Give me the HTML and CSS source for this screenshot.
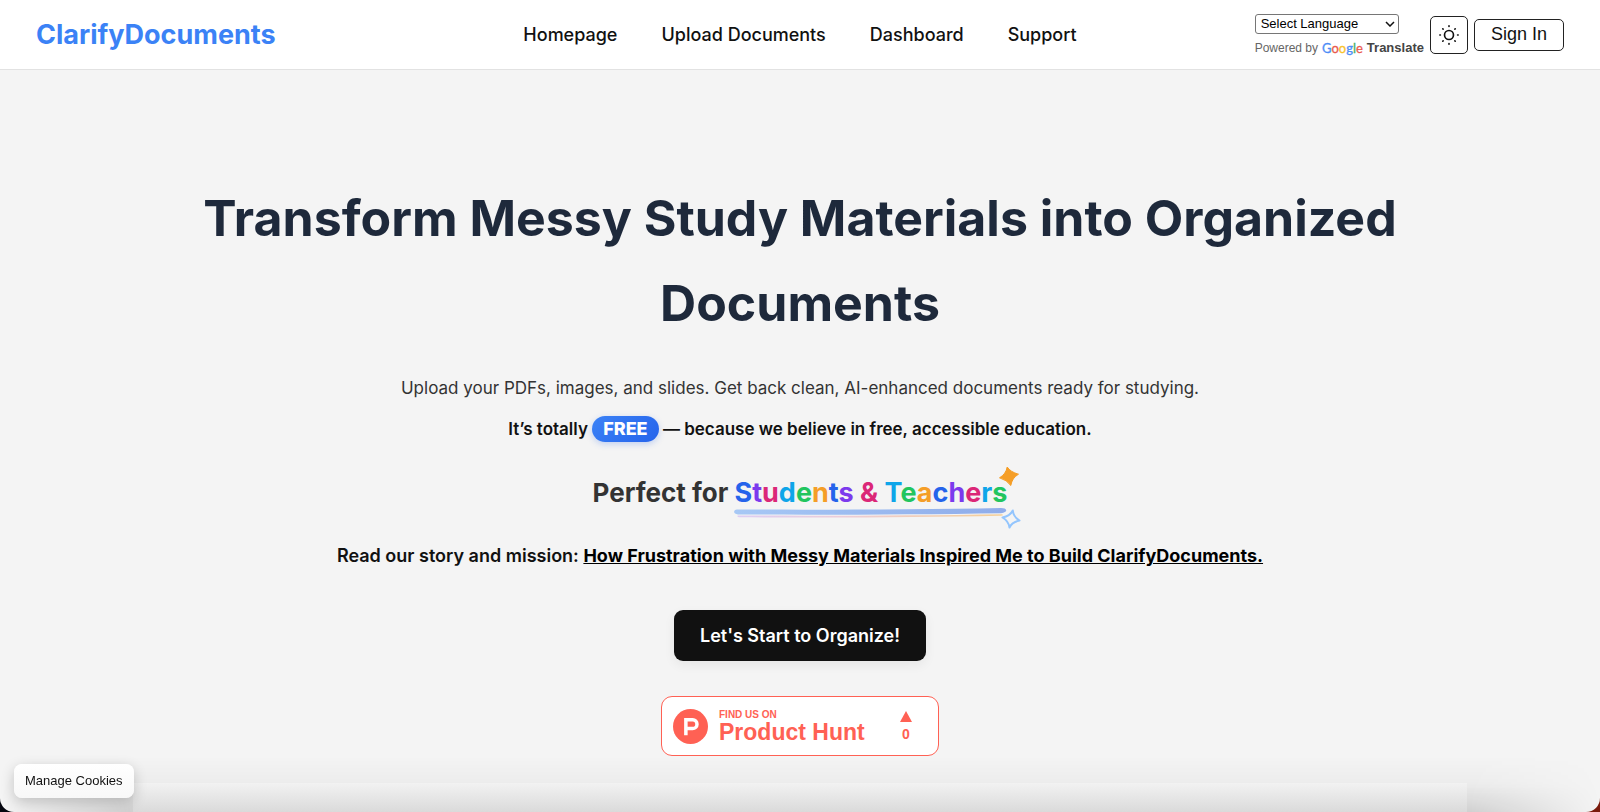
FILE: index.html
```html
<!DOCTYPE html>
<html lang="en">
<head>
    <meta charset="UTF-8">
    <meta name="viewport" content="width=device-width, initial-scale=1.0">
    <title>ClarifyDocuments</title>
    <link rel="stylesheet" href="styles.css">
</head>
<body>
    <div class="page">
        <header class="header">
            <a class="logo" href="#">ClarifyDocuments</a>

            <nav class="nav">
                <a href="#">Homepage</a>
                <a href="#">Upload Documents</a>
                <a href="#">Dashboard</a>
                <a href="#">Support</a>
            </nav>

            <div class="header-actions">
                <div class="translate">
                    <div class="select-wrap">
                        <select class="language-select" aria-label="Select Language">
                            <option>Select Language</option>
                        </select>
                        <svg class="chevron" viewBox="0 0 10 6" aria-hidden="true"><path d="M1 1l4 4 4-4"/></svg>
                    </div>
                    <div class="powered">
                        <span>Powered by</span>
                        <span class="google"><span class="g-blue">G</span><span class="g-red">o</span><span class="g-yellow">o</span><span class="g-blue">g</span><span class="g-green">l</span><span class="g-red">e</span></span>
                        <a class="translate-link" href="#">Translate</a>
                    </div>
                </div>
                <button class="theme-btn" aria-label="Toggle theme">
                    <svg viewBox="0 0 24 24" aria-hidden="true">
                        <circle cx="12" cy="12" r="4.900"/>
                        <path d="M12 2v.6M12 21.400V22M2 12h.6M21.400 12H22M5.200 5.200l.4.4M18.400 18.400l.4.4M5.200 18.800l.4-.4M18.400 5.600l.4-.4"/>
                    </svg>
                </button>
                <button class="signin-btn">Sign In</button>
            </div>
        </header>

        <main class="hero">
            <h1>Transform Messy Study Materials into Organized Documents</h1>

            <p class="lead">Upload your PDFs, images, and slides. Get back clean, AI-enhanced documents ready for studying.</p>

            <p class="free-line">It’s totally <span class="free-badge">FREE</span> — because we believe in free, accessible education.</p>

            <h2 class="audience">
                Perfect for
                <span class="rainbow">
                    <span class="c-blue">S</span><span class="c-purple">t</span><span class="c-pink">u</span><span class="c-sky">d</span><span class="c-green">e</span><span class="c-orange">n</span><span class="c-blue">t</span><span class="c-purple">s</span> <span class="c-pink">&amp;</span> <span class="c-sky">T</span><span class="c-green">e</span><span class="c-orange">a</span><span class="c-blue">c</span><span class="c-purple">h</span><span class="c-pink">e</span><span class="c-sky">r</span><span class="c-green">s</span>
                    <svg class="underline" viewBox="0 0 274 10" preserveAspectRatio="none" aria-hidden="true">
                        <defs>
                            <linearGradient id="brush" x1="0" x2="1">
                                <stop offset="0" stop-color="#a7c8f5"/>
                                <stop offset="1" stop-color="#8facea"/>
                            </linearGradient>
                            <linearGradient id="thin" x1="0" x2="1">
                                <stop offset="0" stop-color="#dccdf3"/>
                                <stop offset=".4" stop-color="#ecccd8"/>
                                <stop offset="1" stop-color="#f5cf96"/>
                            </linearGradient>
                        </defs>
                        <path fill="url(#brush)" d="M3 1.500C90 2 190 1.500 268 0C275 0 275 4.500 268 5.200C190 6.500 90 7 4 6.500C-1 6-1 2 3 1.500Z"/>
                        <path fill="url(#thin)" d="M4 7.500C90 8 190 7.500 269 6.200C271 7 270 7.600 266 7.800C190 9.600 90 9.800 5 9.300C3 9 3 7.500 4 7.500Z"/>
                    </svg>
                    <svg class="star star-solid" viewBox="0 0 20 20" aria-hidden="true">
                        <path fill="#f59e27" stroke="#f59e27" stroke-linejoin="round" d="M8.200 1Q11.500 6 19.500 8.200Q13 12 11.800 19.500Q8 14 .5 11.800Q7 8 8.200 1Z"/>
                    </svg>
                    <svg class="star star-outline" viewBox="0 0 20 20" aria-hidden="true">
                        <path fill="#f4f4f4" stroke="#93c5fd" stroke-width="2" stroke-linejoin="round" d="M11.800 1.500Q12.500 8 18.500 11.500Q11 13 8.500 18.500Q7.500 12 1.500 8.500Q9 7 11.800 1.500Z"/>
                    </svg>
                </span>
            </h2>

            <p class="story">Read our story and mission: <a href="#">How Frustration with Messy Materials Inspired Me to Build ClarifyDocuments.</a></p>

            <button class="cta-btn">Let's Start to Organize!</button>

            <a class="ph-badge" href="#">
                <svg class="ph-logo" viewBox="0 0 34 34" aria-hidden="true">
                    <circle cx="17" cy="17" r="17" fill="#ff6154"/>
                    <path fill="none" stroke="#fff" stroke-width="3.400" d="M12.500 25.500V10.500h6.600a4.200 4.200 0 0 1 0 8.400H12.500"/>
                </svg>
                <span class="ph-text">
                    <span class="ph-small">FIND US ON</span>
                    <span class="ph-name">Product Hunt</span>
                </span>
                <span class="ph-votes">
                    <svg viewBox="0 0 12 11" aria-hidden="true"><path fill="#ff6154" d="M6 0l6 11H0z"/></svg>
                    <span>0</span>
                </span>
            </a>
        </main>

        <div class="bottom-fade"></div>
        <div class="bottom-strip"></div>

        <button class="cookies-btn">Manage Cookies</button>
    </div>
</body>
</html>
```
FILE: styles.css
```css
* {
    box-sizing: border-box;
}

body {
    margin: 0;
    background: linear-gradient(90deg, #05060f 0%, #05060f 50%, #7a1a0c 50%, #7a1a0c 100%);
    font-family: Inter, 'Liberation Sans', sans-serif;
    color: #111;
}

.page {
    position: relative;
    min-height: 100vh;
    background: #f4f4f4;
    border-radius: 0 0 14px 14px;
    overflow: hidden;
}

.header {
    display: grid;
    grid-template-columns: 1fr auto 1fr;
    align-items: center;
    height: 70px;
    padding: 0 36px;
    background: #fff;
    border-bottom: 1px solid #e2e2e2;
}

.logo {
    color: #3b82f6;
    font-size: 27px;
    font-weight: 700;
    text-decoration: none;
}

.nav {
    display: flex;
    gap: 44px;
}

.nav a {
    color: #111;
    font-size: 18px;
    font-weight: 500;
    text-decoration: none;
}

.header-actions {
    display: flex;
    align-items: center;
    justify-content: flex-end;
    gap: 6px;
    font-family: 'Liberation Sans', sans-serif;
}

.translate {
    display: flex;
    flex-direction: column;
    gap: 6px;
}

.select-wrap {
    position: relative;
    width: 144px;
}

.language-select {
    display: block;
    appearance: none;
    width: 100%;
    height: 20px;
    padding: 0 5px;
    background: #fff;
    border: 1px solid #767676;
    border-radius: 3px;
    color: #000;
    font-family: inherit;
    font-size: 13px;
}

.chevron {
    position: absolute;
    top: 7px;
    right: 4px;
    width: 10px;
    height: 6px;
    fill: none;
    stroke: #111;
    stroke-width: 1.5;
    pointer-events: none;
}

.powered {
    display: flex;
    align-items: center;
    gap: 4px;
    color: #666;
    font-size: 12px;
    line-height: 16px;
}

.google {
    font-family: Lato, sans-serif;
    font-size: 13px;
    font-weight: 400;
    -webkit-text-stroke: 0.3px;
}

.g-blue {
    color: #4d8df6;
}

.g-red {
    color: #ea5a4e;
}

.g-yellow {
    color: #f8c32c;
}

.g-green {
    color: #4bae64;
}

.translate-link {
    color: #444;
    font-size: 13px;
    font-weight: 700;
    text-decoration: none;
}

.theme-btn,
.signin-btn {
    display: flex;
    align-items: center;
    justify-content: center;
    background: #fff;
    border: 1px solid #222;
    border-radius: 5px;
    color: #111;
    cursor: pointer;
}

.theme-btn {
    width: 38px;
    height: 38px;
    padding: 0;
}

.theme-btn svg {
    width: 22px;
    height: 22px;
    fill: none;
    stroke: #111;
    stroke-width: 1.8;
    stroke-linecap: round;
}

.signin-btn {
    height: 32px;
    padding: 0 16px;
    font-family: inherit;
    font-size: 18px;
}

.hero {
    display: flex;
    flex-direction: column;
    align-items: center;
    max-width: 1240px;
    margin: 0 auto;
    padding: 106px 16px 40px;
    text-align: center;
}

h1 {
    margin: 0 0 27px;
    color: #1e293b;
    font-size: 50px;
    font-weight: 700;
    line-height: 85px;
}

.lead,
.free-line,
.story {
    margin: 0;
    line-height: 30px;
}

.lead,
.free-line {
    font-size: 17px;
}

.lead {
    margin-bottom: 11px;
    color: #333;
}

.free-line,
.story {
    font-weight: 600;
}

.story {
    font-size: 18px;
}

.free-badge {
    display: inline-block;
    padding: 0 11px;
    background: linear-gradient(135deg, #3b82f6, #2563eb);
    border-radius: 13px;
    box-shadow: 0 2px 6px rgba(37, 99, 235, 0.25);
    color: #fff;
    font-size: 18px;
    font-weight: 800;
    line-height: 26px;
}

.audience {
    margin: 28px 0 27px;
    color: #333;
    font-size: 26px;
    font-weight: 700;
    line-height: 42px;
}

.rainbow {
    display: inline-block;
    position: relative;
    font-size: 27px;
}

.c-blue {
    color: #2563eb;
}

.c-purple {
    color: #7c3aed;
}

.c-pink {
    color: #db2777;
}

.c-sky {
    color: #0ea5e9;
}

.c-green {
    color: #22c55e;
}

.c-orange {
    color: #f59e27;
}

.underline {
    position: absolute;
    left: 0;
    bottom: -4px;
    width: 100%;
    height: 10px;
}

.star {
    position: absolute;
    width: 20px;
    height: 20px;
}

.star-solid {
    top: -6px;
    right: -12px;
}

.star-outline {
    right: -14px;
    bottom: -15px;
}

.story a {
    color: #000;
    font-weight: 700;
}

.cta-btn {
    margin-top: 39px;
    padding: 0 26px;
    background: #111;
    border: none;
    border-radius: 9px;
    box-shadow: 0 4px 12px rgba(0, 0, 0, 0.06);
    color: #fff;
    font-family: inherit;
    font-size: 18px;
    font-weight: 600;
    line-height: 51px;
    cursor: pointer;
}

.ph-badge {
    display: flex;
    align-items: center;
    width: 278px;
    height: 60px;
    margin-top: 35px;
    padding: 0 26px 0 11px;
    background: #fff;
    border: 1px solid #ff6154;
    border-radius: 11px;
    color: #ff6154;
    font-family: 'Liberation Sans', sans-serif;
    font-weight: 700;
    text-decoration: none;
}

.ph-logo {
    width: 35px;
    height: 35px;
    margin-right: 11px;
}

.ph-text {
    display: flex;
    flex-direction: column;
    align-items: flex-start;
}

.ph-small {
    font-size: 10px;
    line-height: 11px;
}

.ph-name {
    font-size: 23px;
    line-height: 24px;
}

.ph-votes {
    display: flex;
    flex-direction: column;
    align-items: center;
    gap: 4px;
    margin-left: auto;
    font-size: 14px;
    line-height: 16px;
}

.ph-votes svg {
    width: 12px;
    height: 11px;
}

/* soft shade along the bottom edge */
.bottom-fade {
    position: absolute;
    left: 0;
    right: 0;
    bottom: 0;
    height: 56px;
    background: linear-gradient(rgba(0, 0, 0, 0), rgba(0, 0, 0, 0.03) 50%, rgba(0, 0, 0, 0.14));
    mask-image: linear-gradient(90deg, transparent, #000 130px, #000 calc(100% - 130px), transparent);
    pointer-events: none;
}

.bottom-strip {
    position: absolute;
    left: 133px;
    right: 133px;
    bottom: 0;
    height: 29px;
    background: linear-gradient(#f2f2f2, #dadada);
    pointer-events: none;
}

.cookies-btn {
    position: fixed;
    left: 14px;
    bottom: 14px;
    padding: 0 11px;
    background: linear-gradient(#fff, #f8f8f8);
    border: none;
    border-radius: 8px;
    box-shadow: 0 4px 14px rgba(0, 0, 0, 0.2);
    color: #111;
    font-family: 'Liberation Sans', sans-serif;
    font-size: 13px;
    line-height: 34px;
    cursor: pointer;
}
```
